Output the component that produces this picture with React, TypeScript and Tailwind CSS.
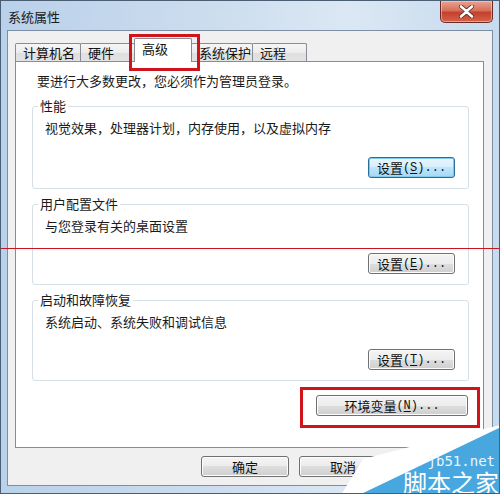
import React from "react";

const F = { fontFamily: '"Noto Sans CJK SC", "Noto Sans", sans-serif' };
const MONO = { fontFamily: '"Liberation Mono", monospace' };

function Key({ k }: { k: string }) {
  return (
    <span style={MONO} className="text-[12px]">
      (<span className="underline underline-offset-2">{k}</span>)...
    </span>
  );
}

const btn =
  "h-[21px] rounded-[3px] border border-[#707070] bg-[linear-gradient(to_bottom,#f4f4f4_0%,#ececec_50%,#dedede_50%,#cfcfcf_100%)] flex items-center justify-center text-[13px] leading-none text-[#111] shadow-[inset_0_0_0_1px_#fcfcfc]";
const btnFocus =
  "h-[21px] rounded-[3px] border border-[#2c6d93] bg-[linear-gradient(to_bottom,#e8f6fd_0%,#d5effc_50%,#bde6fd_50%,#a6d8f4_100%)] flex items-center justify-center text-[13px] leading-none text-[#111] shadow-[inset_0_0_0_1px_#7fc9ec]";

function Group({
  label,
  desc,
  children,
  h,
}: {
  label: string;
  desc: string;
  children: React.ReactNode;
  h: string;
}) {
  return (
    <div className={`relative ${h} rounded-[3px] border border-[#d5dfe5] flex flex-col`}>
      <div className="absolute -top-[9px] left-[5px] bg-white px-[2px] text-[13px] leading-[16px] text-[#1a1a1a]">
        {label}
      </div>
      <div className="mt-[13px] ml-[12px] text-[13px] leading-[16px] text-[#1a1a1a]">{desc}</div>
      <div className="mt-auto mb-[10px] mr-[13px] flex justify-end">{children}</div>
    </div>
  );
}

function Tab({ label, w, selected }: { label: string; w: string; selected?: boolean }) {
  if (selected) {
    return (
      <div
        className={`${w} h-[24px] -ml-px relative z-10 border border-b-0 border-[#898c95] bg-white pl-[7px] pt-[1px] text-[13px] leading-[18px] text-[#111] rounded-t-[2px]`}
      >
        {label}
      </div>
    );
  }
  return (
    <div
      className={`${w} h-[19px] -ml-px first:ml-0 border border-b-0 border-[#898c95] bg-[linear-gradient(to_bottom,#f6f6f6_0%,#ebebeb_50%,#dfdfdf_50%,#e3e3e3_100%)] pl-[7px] text-[13px] leading-[18px] text-[#111] rounded-t-[2px]`}
    >
      {label}
    </div>
  );
}

export default function App() {
  return (
    <div
      style={F}
      className="relative w-[500px] h-[494px] overflow-hidden bg-[linear-gradient(to_right,#b9d1ea_0%,#cbdcee_40%,#dbe7f4_70%,#c7daee_100%)] border border-[#4c5e74] flex flex-col"
    >
      {/* Title bar */}
      <div className="h-[29px] flex items-start justify-between shrink-0">
        <div className="pl-[7px] pt-[8px] text-[13px] leading-[16px] text-[#1a1a1a]">系统属性</div>
        <div className="mr-[6px] w-[53px] h-[22px] rounded-b-[5px] border border-t-0 border-[#6b2a25] bg-[linear-gradient(to_bottom,#e8a493_0%,#d7705a_45%,#c4402c_55%,#d3644d_100%)] flex items-center justify-center shadow-[inset_0_0_0_1px_rgba(255,220,210,0.5)]">
          <svg width="15" height="13" viewBox="0 0 15 13">
            <path
              d="M2 1.5 L7.5 6.2 L13 1.5 M2 11.5 L7.5 6.8 L13 11.5"
              stroke="#5a2a22"
              strokeWidth="4.2"
              strokeLinecap="round"
              fill="none"
            />
            <path
              d="M2 1.5 L7.5 6.2 L13 1.5 M2 11.5 L7.5 6.8 L13 11.5"
              stroke="#ffffff"
              strokeWidth="2.6"
              strokeLinecap="round"
              fill="none"
            />
          </svg>
        </div>
      </div>

      {/* Client area */}
      <div className="mx-[6px] h-[456px] border border-[#7d8ea3] bg-[#f0f0f0] flex flex-col shrink-0">
        {/* Tabs */}
        <div className="ml-[7px] mt-[6px] flex items-end h-[25px]">
          <Tab label="计算机名" w="w-[66px]" />
          <Tab label="硬件" w="w-[55px]" />
          <Tab label="高级" w="w-[58px]" selected />
          <Tab label="系统保护" w="w-[62px]" />
          <Tab label="远程" w="w-[55px]" />
        </div>
        {/* Panel */}
        <div className="ml-[7px] -mt-px w-[469px] h-[387px] border border-[#898c95] bg-white flex flex-col">
          <div className="mt-[11px] ml-[21px] text-[13px] leading-[16px] text-[#1a1a1a]">
            要进行大多数更改，您必须作为管理员登录。
          </div>
          <div className="mt-[17px] mx-[16px] mr-[14px] flex flex-col gap-[15px]">
            <Group label="性能" desc="视觉效果，处理器计划，内存使用，以及虚拟内存" h="h-[83px]">
              <div className={`${btnFocus} w-[87px]`}>
                设置<Key k="S" />
              </div>
            </Group>
            <Group label="用户配置文件" desc="与您登录有关的桌面设置" h="h-[81px]">
              <div className={`${btn} w-[87px]`}>
                设置<Key k="E" />
              </div>
            </Group>
            <Group label="启动和故障恢复" desc="系统启动、系统失败和调试信息" h="h-[81px]">
              <div className={`${btn} w-[87px]`}>
                设置<Key k="T" />
              </div>
            </Group>
          </div>
          <div className="mt-[14px] mr-[15px] flex justify-end">
            <div className={`${btn} w-[152px]`}>
              环境变量<Key k="N" />
            </div>
          </div>
        </div>
        {/* Bottom buttons */}
        <div className="mt-[8px] mr-[7px] flex justify-end gap-[10px]">
          <div className={`${btn} w-[88px]`}>确定</div>
          <div className={`${btn} w-[88px]`}>取消</div>
          <div className={`${btn} w-[88px]`}>应用(A)</div>
        </div>
      </div>

      {/* Annotations */}
      <div className="absolute left-[128px] top-[33px] w-[71px] h-[37px] border-[3px] border-[#d0141c] z-20" />
      <div className="absolute left-[299px] top-[386px] w-[180px] h-[41px] border-[3px] border-[#d0141c] z-20" />
      <div className="absolute left-0 top-[247px] w-[500px] h-px bg-[#c8141c] z-20" />

      {/* Watermark */}
      <svg className="absolute left-0 top-0 z-30" width="500" height="494" viewBox="0 0 500 494">
        <polygon points="362,458 432,440 500,424 500,494 340,494" fill="#ffffff" />
        <polygon points="500,426 500,494 358,494" fill="#47a7de" />
      </svg>
      <div
        className="absolute right-[4px] top-[453px] z-40 text-[14px] leading-[14px] text-[#eaf6ff]"
        style={{ fontFamily: '"DejaVu Sans Mono", monospace' }}
      >
        jb51.net
      </div>
      <div className="absolute right-0 top-[469px] z-40 text-[24px] leading-[24px] text-white">
        脚本之家
      </div>
    </div>
  );
}
